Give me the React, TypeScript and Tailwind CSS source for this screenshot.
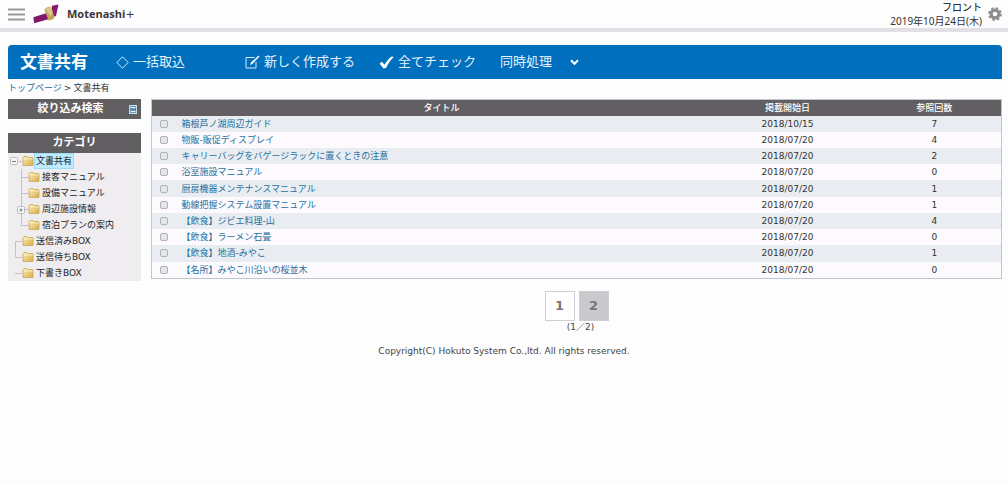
import { useState } from "react";

type Branch = "minus" | "child" | "plus" | "childEnd" | "first" | "last" | "single";

const tree: { name: string; branch: Branch }[] = [
  { name: "文書共有", branch: "minus" },
  { name: "接客マニュアル", branch: "child" },
  { name: "設備マニュアル", branch: "child" },
  { name: "周辺施設情報", branch: "plus" },
  { name: "宿泊プランの案内", branch: "childEnd" },
  { name: "送信済みBOX", branch: "first" },
  { name: "送信待ちBOX", branch: "last" },
  { name: "下書きBOX", branch: "single" },
];

const documents = [
  { title: "箱根芦ノ湖周辺ガイド", date: "2018/10/15", count: 7 },
  { title: "物販-販促ディスプレイ", date: "2018/07/20", count: 4 },
  { title: "キャリーバッグをバゲージラックに置くときの注意", date: "2018/07/20", count: 2 },
  { title: "浴室施設マニュアル", date: "2018/07/20", count: 0 },
  { title: "厨房機器メンテナンスマニュアル", date: "2018/07/20", count: 1 },
  { title: "動線把握システム設置マニュアル", date: "2018/07/20", count: 1 },
  { title: "【飲食】ジビエ料理-山", date: "2018/07/20", count: 4 },
  { title: "【飲食】ラーメン石畳", date: "2018/07/20", count: 0 },
  { title: "【飲食】地酒-みやこ", date: "2018/07/20", count: 1 },
  { title: "【名所】みやこ川沿いの桜並木", date: "2018/07/20", count: 0 },
];

const branchLines: Record<Branch, string> = {
  minus: "M9 8.5H12",
  child: "M11.5 0V16M12 8.5H18",
  plus: "M11.5 0V16M12 8.5H18",
  childEnd: "M11.5 0V8.5H18",
  first: "M12 8.5H5.5V16",
  last: "M5.5 0V8.5H12",
  single: "M5 8.5H12",
};

const BranchIcon = ({ branch }: { branch: Branch }) => {
  const nested = branch === "child" || branch === "plus" || branch === "childEnd";
  const width = nested ? 18 : 12;
  return (
    <svg width={width} height="16" viewBox={`0 0 ${width} 16`} fill="none" className="shrink-0">
      <path d={branchLines[branch]} stroke="#c3c2c8" />
      {branch === "minus" && (
        <>
          <rect x="0.5" y="4.5" width="7" height="7" rx="1" fill="#f6f6f8" stroke="#bdbcc3" />
          <path d="M2 8.5H6" stroke="#6f7783" />
        </>
      )}
      {branch === "plus" && (
        <>
          <rect x="7.5" y="5.5" width="7" height="7" rx="1" fill="#f6f6f8" stroke="#bdbcc3" />
          <path d="M9.5 9H12.5M11 7.5V10.5" stroke="#6f7783" />
        </>
      )}
    </svg>
  );
};

const Folder = () => (
  <svg width="12" height="12" viewBox="0 0 12 12" className="shrink-0">
    <defs>
      <linearGradient id="folder" x1="0" y1="0" x2="1" y2="1">
        <stop offset="0" stopColor="#fbeeb8" />
        <stop offset="1" stopColor="#d8ab4c" />
      </linearGradient>
    </defs>
    <path d="M1 10.5V2.5L2 1.5H5L6 2.5H10.5L11 3.5V10.5Z" fill="url(#folder)" stroke="#c9a655" strokeWidth="0.8" />
    <path d="M1.5 4H10.5" stroke="#fff3c4" strokeWidth="0.8" />
  </svg>
);

const Logo = () => (
  <svg width="26" height="20" viewBox="0 0 26 20">
    <path d="M19 1.8L25.5 0.5L23 12L18 13.5Z" fill="#8a1a6b" />
    <path d="M0.3 13.2L13 9.2L17 14.8L1.2 19.2Z" fill="#7f1a6c" />
    <path d="M11.5 5.5C12.5 4 15 2.6 18 2.8L21.5 13.5C20 15.5 18 16.6 15.5 16.5Z" fill="#c7a552" />
    <path d="M12.5 5L18 12.5L19.5 7.5L18 2.8Z" fill="#dcc68a" />
  </svg>
);

const Gear = () => (
  <svg width="14" height="14" viewBox="0 0 14 14">
    <circle cx="7" cy="7" r="5.9" fill="none" stroke="#8d8d90" strokeWidth="2" strokeDasharray="2.4 2.234" />
    <circle cx="7" cy="7" r="3.9" fill="none" stroke="#8d8d90" strokeWidth="3.2" />
  </svg>
);

const Header = () => (
  <header className="flex items-center border-b-4 border-[#e2e0e4] h-8 pl-2 pr-1.5">
    <button aria-label="メニュー" className="mr-2">
      <svg width="17" height="13" viewBox="0 0 17 13">
        <path d="M0 1.5H17M0 6.5H17M0 11.5H17" stroke="#98979a" strokeWidth="2" />
      </svg>
    </button>
    <a href="#" className="flex items-center gap-2">
      <Logo />
      <span className="font-['Open_Sans'] text-[11px] leading-4 font-bold text-[#3c3638]">
        Motenashi<span className="font-['DejaVu_Sans'] font-normal">+</span>
      </span>
    </a>
    <div className="ml-auto flex items-center gap-1.5">
      <div className="text-right font-['Noto_Sans','Noto_Sans_CJK_JP',sans-serif] text-[10px] leading-3.5 text-[#333]">
        <div className="text-black">フロント</div>
        <div>2019年10月24日(木)</div>
      </div>
      <button aria-label="設定">
        <Gear />
      </button>
    </div>
  </header>
);

const Toolbar = () => (
  <nav className="mt-[13px] mr-1.5 ml-2 flex h-[34px] items-center rounded-t-sm bg-[#006fbe] pl-3 text-[13px] text-[#e6f2fb]">
    <h1 className="mr-7 text-[17px] leading-6 font-bold text-white">文書共有</h1>
    <button className="mr-15 flex items-center gap-1">
      <svg width="13" height="13" viewBox="0 0 13 13" fill="none">
        <path d="M6.5 0.8L12.2 6.5L6.5 12.2L0.8 6.5Z" stroke="#d5e8f6" />
      </svg>
      一括取込
    </button>
    <button className="mr-6 flex items-center gap-1">
      <svg width="15" height="14" viewBox="0 0 15 14" fill="none">
        <path d="M9.5 2.5H1V13H11V7" stroke="#d5e8f6" />
        <path d="M5.2 10L6 7.5L13.5 0.5L14.5 1.5L7.3 9Z" fill="#fff" />
      </svg>
      新しく作成する
    </button>
    <button className="mr-6 flex items-center gap-1">
      <svg width="15" height="13" viewBox="0 0 15 13">
        <path d="M0.5 7.5L3 5.8L5.5 8.8C7.5 5 9.8 2.2 13 0.2L14.5 1.2C11 4.5 8.8 8 7 12L4.5 12.6Z" fill="#fff" />
      </svg>
      全てチェック
    </button>
    <label className="flex items-center">
      <select aria-label="同時処理" className="w-[70px] appearance-none bg-transparent">
        <option>同時処理</option>
      </select>
      <svg width="9" height="7" viewBox="0 0 9 7" fill="none" className="pointer-events-none">
        <path d="M1 1.2L4.5 4.8L8 1.2" stroke="#fff" strokeWidth="2" />
      </svg>
    </label>
  </nav>
);

const Sidebar = () => (
  <aside className="w-[133px] shrink-0">
    <div className="flex h-5 items-center bg-[#625f63] pr-1 text-[11px] font-bold text-white">
      <h2 className="flex-1 pl-1 text-center">絞り込み検索</h2>
      <button aria-label="開く">
        <svg width="8" height="9" viewBox="0 0 8 9">
          <rect x="0.5" y="0.5" width="7" height="8" fill="#4d7ea6" stroke="#c4dcee" />
          <path d="M1.5 2.5H6.5M1.5 6.5H6.5" stroke="#e8f2fa" strokeWidth="1.5" />
        </svg>
      </button>
    </div>
    <h2 className="mt-3.5 h-5 bg-[#625f63] text-center text-[11px] leading-5 font-bold text-white">カテゴリ</h2>
    <ul className="bg-[#efedf0] pl-0.5 text-[9px] leading-4 text-[#222]">
      {tree.map((item) => (
        <li key={item.name} className="flex h-4 items-center">
          <BranchIcon branch={item.branch} />
          <Folder />
          <a
            href="#"
            className={
              item.branch === "minus"
                ? "bg-[#beebff] px-0.5 outline -outline-offset-1 outline-[#9ddcf8]"
                : "px-0.5"
            }
          >
            {item.name}
          </a>
        </li>
      ))}
    </ul>
  </aside>
);

const DocumentTable = () => (
  <table className="h-[180px] w-full table-fixed border-collapse border border-[#c0c4cf] text-[9px] leading-3.5 text-[#333]">
    <colgroup>
      <col className="w-6" />
      <col />
      <col className="w-[160px]" />
      <col className="w-[134px]" />
    </colgroup>
    <thead>
      <tr className="h-4 bg-[#625f63] text-white">
        <th className="p-0"></th>
        <th className="p-0 font-medium">タイトル</th>
        <th className="p-0 font-medium">掲載開始日</th>
        <th className="p-0 font-medium">参照回数</th>
      </tr>
    </thead>
    <tbody>
      {documents.map((doc) => (
        <tr key={doc.title} className="odd:bg-[#e9edf1] even:bg-[#fcfafd]">
          <td className="p-0 text-center">
            <input
              type="checkbox"
              aria-label={doc.title}
              className="mx-auto block size-2 appearance-none rounded-xs border border-[#b2b2b4] bg-[#e6e6e8] checked:bg-[#006fbe]"
            />
          </td>
          <td className="px-1.5 py-0">
            <a href="#" className="text-[#1f6f9f]">{doc.title}</a>
          </td>
          <td className="p-0 text-center">{doc.date}</td>
          <td className="p-0 text-center">{doc.count}</td>
        </tr>
      ))}
    </tbody>
  </table>
);

const Pager = () => {
  const [page, setPage] = useState(1);

  return (
    <div className="mt-3 flex flex-col items-center">
      <div className="flex gap-1 text-[13px] font-bold text-[#77767a]">
        {[1, 2].map((n) => (
          <button
            key={n}
            onClick={() => setPage(n)}
            className={
              n === page
                ? "size-[30px] border border-[#cfced2] bg-white"
                : "size-[30px] border border-[#cfced2] bg-[#cac9cd]"
            }
          >
            {n}
          </button>
        ))}
      </div>
      <div className="pl-2 text-[9px] leading-3 text-[#444]">({page}／2)</div>
    </div>
  );
};

const App = () => {
  return (
    <div className="min-h-screen bg-[#fefdfe] font-['DejaVu_Sans','Noto_Sans_CJK_JP',sans-serif]">
      <Header />
      <Toolbar />
      <div className="mx-2 flex h-5 items-center gap-0.5 text-[9px] text-[#333]">
        <a href="#" className="text-[#1f6f9f]">トップページ</a>
        <span>&gt;</span>
        <span>文書共有</span>
      </div>
      <div className="flex items-start gap-2.5 pr-1.5 pl-2">
        <Sidebar />
        <main className="min-w-0 flex-1">
          <DocumentTable />
          <Pager />
        </main>
      </div>
      <footer className="mt-3 text-center text-[9px] leading-3 text-[#444]">
        Copyright(C) Hokuto System Co.,ltd. All rights reserved.
      </footer>
    </div>
  );
};

export default App;
